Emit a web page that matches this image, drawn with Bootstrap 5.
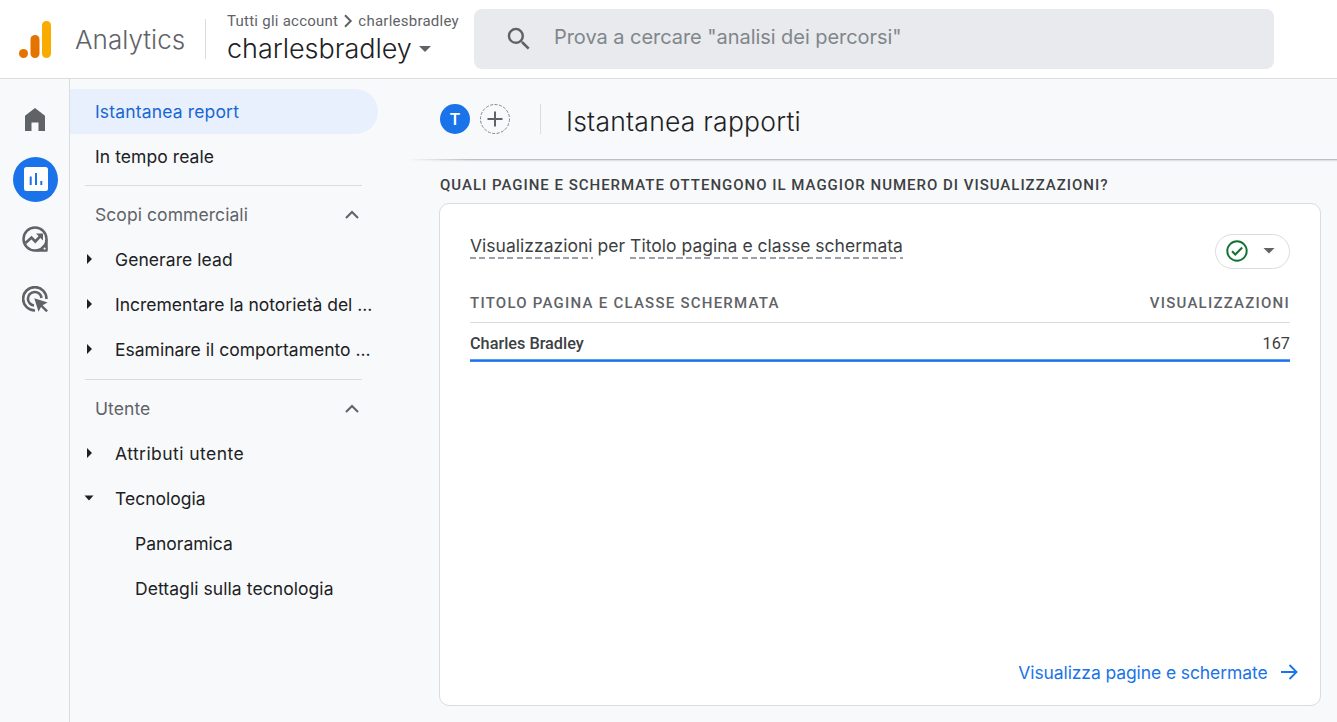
<!DOCTYPE html>
<html lang="it">
<head>
<meta charset="utf-8">
<meta name="viewport" content="width=device-width, initial-scale=1">
<title>Analytics - Istantanea rapporti</title>
<link href="https://cdn.jsdelivr.net/npm/bootstrap@5.3.0/dist/css/bootstrap.min.css" rel="stylesheet">
<style>
body{height:100vh;overflow:hidden;background:#f8f9fb;color:#202124;font-family:Inter,"Open Sans",sans-serif;font-size:17.5px;line-height:24px}
.robo{font-family:Roboto,sans-serif}
svg{display:block;flex:none}
a{text-decoration:none;color:inherit}
.topbar{height:79px;background:#fff;border-bottom:1px solid #dadce0}
.brand-mark{margin-left:19px}
.brand-name{width:130px;margin-left:24px;font-size:26px;letter-spacing:.04px;color:#5f6368;line-height:40px;padding-top:1px;font-weight:350}
.brand-rule{width:1px;height:40px;background:#dadce0}
.account{width:247px;margin-left:21px}
.account-path{font-size:15px;line-height:18px;letter-spacing:.25px;color:#5f6368}
.account-name{font-size:27px;line-height:34px;letter-spacing:-.03px;padding-top:2px;font-weight:350}
.searchbox{width:800px;height:60px;border-radius:8px;background:#e8eaed;color:#80868b;font-size:20px;letter-spacing:-.05px}
.search-icon{margin-left:30px}
.search-hint{margin:0 0 4px 20px}
.rail{width:70px;border-right:1px solid #dadce0;padding:18px 0 0 2px;gap:15px}
.rail a{width:45px;height:45px;padding-bottom:1px}
.rail a:not(.current){padding-right:1px}
.rail a.current{background:#1a73e8}
.sidebar{width:308px;padding-top:10px}
.item{height:45px;padding-left:25px;letter-spacing:.07px;white-space:nowrap}
.item.current{background:#e8f0fe;color:#1967d2;border-radius:0 23px 23px 0;letter-spacing:.16px}
.item.tree{padding-left:13px}
.item.tree svg{width:12px;margin:0 20px 1px 0}
.item.leaf{padding-left:65px}
.item.tight{letter-spacing:0}
.item.loose{letter-spacing:.45px}
.section-name{padding-right:19.500px;color:#5f6368}
.section-name svg{margin-bottom:1px}
.side-rule{height:1px;background:#dadce0;margin:6px 16px 6px 15px}
.side-rule.second{margin-top:7px}
.main-area{padding-left:22px}
.report-head{height:81px;padding:0 0 2px 40px}
.avatar{width:30px;height:30px;border-radius:50%;background:#1a73e8;color:#fff;font-size:17px;font-weight:500}
.add-view{margin-left:10px}
.head-rule{width:1px;height:30px;margin:0 25px 0 30px;background:#dadce0}
.report-title{font-size:26.5px;letter-spacing:.24px;line-height:36px;font-weight:350;margin:0;padding-top:4px}
.fade-rule{height:3px;margin-top:-1px;background:linear-gradient(#bcbfc3 0 1px,#dfe1e4 1px 2px,#f1f2f5 2px 3px);-webkit-mask-image:linear-gradient(90deg,transparent 8px,#000 70px);mask-image:linear-gradient(90deg,transparent 8px,#000 70px)}
.question{margin:11px 0 0 40px;font-size:15px;line-height:24px;font-weight:500;letter-spacing:.99px;color:#3c4043;white-space:nowrap}
.report-card{width:882px;height:503px;margin:6px 0 0 39px;border:1px solid #dadce0;border-radius:10px;padding:30px 30px 20px}
.card-name{color:#3c4043;letter-spacing:.02px;line-height:24px;font-size:17.5px}
.dashed{display:inline-block;height:25px;background:repeating-linear-gradient(90deg,#9aa0a6 0 6px,transparent 6px 9.3px) 0 100%/100% 2px no-repeat}
.status{width:75px;height:35px;border:1px solid #dadce0;border-radius:18px;padding:0 14px 1px 10px}
.col-heads{margin-top:17px;height:37px;padding-bottom:2px;font-size:15px;font-weight:500;color:#5f6368;border-bottom:1px solid #dadce0;letter-spacing:1.24px}
.data-row{height:36px;padding-top:5px;font-size:16.25px;color:#3c4043}
.row-name{font-weight:500}
.data-bar{height:3px;background:linear-gradient(#5c9cf0 0 1px,#1a73e8 1px 2px,#3d89ec 2px 3px)}
.more{color:#1a73e8;letter-spacing:-.1px;margin-right:-7.500px;gap:13px}
.more svg{margin-bottom:2px}
</style>
</head>
<body class="d-flex flex-column">
<header class="topbar d-flex align-items-center flex-shrink-0">
  <svg class="brand-mark" width="32" height="37" viewBox="0 0 32 37"><rect x="23" width="9" height="37" rx="4.5" fill="#f9ab00"/><rect x="11.5" y="14" width="9" height="23" rx="4.5" fill="#e37400"/><circle cx="4.5" cy="32.5" r="4.5" fill="#e37400"/></svg>
  <div class="brand-name">Analytics</div>
  <div class="brand-rule"></div>
  <div class="account">
    <div class="account-path robo d-flex align-items-center"><span>Tutti gli account</span>
      <svg class="ms-1 me-1" width="12" height="14" viewBox="0 0 12 14"><path d="M3 1.2 8.7 7 3 12.8" fill="none" stroke="#5f6368" stroke-width="2"/></svg><span>charlesbradley</span></div>
    <div class="account-name d-flex align-items-center">charlesbradley<svg style="margin-left:7px" width="12" height="6" viewBox="0 0 12 6"><path d="M0 0h12L6 6z" fill="#5f6368"/></svg></div>
  </div>
  <div class="searchbox d-flex align-items-center">
    <svg class="search-icon" width="30" height="30" viewBox="0 0 24 24"><path fill="#5f6368" d="M15.5 14h-.79l-.28-.27A6.47 6.47 0 0 0 16 9.5 6.5 6.5 0 1 0 9.5 16c1.61 0 3.09-.59 4.23-1.57l.27.28v.79l5 4.99L20.49 19zm-6 0C7.01 14 5 11.99 5 9.5S7.01 5 9.5 5 14 7.01 14 9.5 11.99 14 9.5 14z"/></svg>
    <span class="search-hint">Prova a cercare "analisi dei percorsi"</span>
  </div>
</header>
<div class="d-flex flex-grow-1">
  <nav class="rail d-flex flex-column align-items-center flex-shrink-0" aria-label="Sezioni">
    <a href="#" class="d-flex align-items-center justify-content-center" aria-label="Home"><svg width="20" height="23" viewBox="0 0 20 23"><path d="M0 23V7.700L10 0l10 7.700V23h-6.500v-8.500h-7V23z" fill="#5f6368"/></svg></a>
    <a href="#" class="current rounded-circle d-flex align-items-center justify-content-center" aria-label="Rapporti"><svg width="24" height="24" viewBox="0 0 24 24"><rect width="24" height="24" rx="2.500" fill="#fff"/><path d="M6.700 9.500V18M12 6v12M17.300 14v4" stroke="#1a73e8" stroke-width="2"/></svg></a>
    <a href="#" class="d-flex align-items-center justify-content-center" aria-label="Esplora"><svg width="26" height="26" viewBox="0 0 26 26"><path d="M13 24.500A11.500 11.500 0 1 1 24.500 13v11.500z" fill="none" stroke="#5f6368" stroke-width="2.500" stroke-linejoin="round"/><path d="M24.500 13.500A11.500 11.500 0 0 1 14 24.500" fill="none" stroke="#5f6368" stroke-width="2.200"/><circle cx="22.300" cy="22.300" r="3" fill="#5f6368"/><circle cx="22.600" cy="22.600" r="1.100" fill="#f8f9fb"/><path d="m3.500 17 6-5.500 3.800 4 6-6.300" fill="none" stroke="#5f6368" stroke-width="2.600"/><path d="M14 7.500h7v7z" fill="#5f6368"/></svg></a>
    <a href="#" class="d-flex align-items-center justify-content-center" aria-label="Pubblicità"><svg width="26" height="26" viewBox="0 0 26 26"><path d="M24.500 13A11.700 11.700 0 1 0 13 24.500" fill="none" stroke="#5f6368" stroke-width="2.600"/><path d="M19.500 12A6.800 6.800 0 1 0 12 19.500" fill="none" stroke="#5f6368" stroke-width="2.600"/><path d="m12.300 12.300 13.300 4.300-5 2.600 5.400 5.300-1.800 1.700-5.200-5.200-2.500 4.700z" fill="#5f6368"/></svg></a>
  </nav>
  <nav class="sidebar flex-shrink-0" aria-label="Rapporti">
    <a href="#" class="item current d-flex align-items-center">Istantanea report</a>
    <a href="#" class="item d-flex align-items-center">In tempo reale</a>
    <div class="side-rule"></div>
    <div class="item section-name d-flex align-items-center justify-content-between">Scopi commerciali<svg width="14" height="9" viewBox="0 0 14 9"><path d="m1 8 6-6 6 6" fill="none" stroke="#5f6368" stroke-width="2"/></svg></div>
    <a href="#" class="item tree d-flex align-items-center"><svg height="10" viewBox="0 0 12 10"><path d="M4 0v10l5-5z" fill="#202124"/></svg>Generare lead</a>
    <a href="#" class="item tree tight d-flex align-items-center"><svg height="10" viewBox="0 0 12 10"><path d="M4 0v10l5-5z" fill="#202124"/></svg>Incrementare la notorietà del ...</a>
    <a href="#" class="item tree tight d-flex align-items-center"><svg height="10" viewBox="0 0 12 10"><path d="M4 0v10l5-5z" fill="#202124"/></svg>Esaminare il comportamento ...</a>
    <div class="side-rule second"></div>
    <div class="item section-name d-flex align-items-center justify-content-between">Utente<svg width="14" height="9" viewBox="0 0 14 9"><path d="m1 8 6-6 6 6" fill="none" stroke="#5f6368" stroke-width="2"/></svg></div>
    <a href="#" class="item tree loose d-flex align-items-center"><svg height="10" viewBox="0 0 12 10"><path d="M4 0v10l5-5z" fill="#202124"/></svg>Attributi utente</a>
    <a href="#" class="item tree tight d-flex align-items-center"><svg height="10" viewBox="0 0 12 10"><path d="M1.500 2.500h9l-4.500 5z" fill="#202124"/></svg>Tecnologia</a>
    <a href="#" class="item leaf tight d-flex align-items-center">Panoramica</a>
    <a href="#" class="item leaf d-flex align-items-center">Dettagli sulla tecnologia</a>
  </nav>
  <main class="main-area flex-grow-1">
    <div class="report-head d-flex align-items-center">
      <div class="avatar robo d-flex align-items-center justify-content-center">T</div>
      <svg class="add-view" width="30" height="30" viewBox="0 0 30 30"><circle cx="15" cy="15" r="14.500" fill="none" stroke="#80868b" stroke-dasharray="3 1.500"/><path d="M15 7.500v15M7.500 15h15" stroke="#5f6368" stroke-width="2"/></svg>
      <div class="head-rule"></div>
      <h1 class="report-title">Istantanea rapporti</h1>
    </div>
    <div class="fade-rule"></div>
    <div class="question robo">QUALI PAGINE E SCHERMATE OTTENGONO IL MAGGIOR NUMERO DI VISUALIZZAZIONI?</div>
    <section class="card report-card">
      <div class="d-flex justify-content-between">
        <h2 class="card-name fw-normal m-0"><span class="dashed">Visualizzazioni</span> per <span class="dashed">Titolo pagina e classe schermata</span></h2>
        <div class="status d-flex align-items-center justify-content-between"><svg width="22" height="22" viewBox="0 0 22 22"><circle cx="11" cy="11" r="9.700" fill="none" stroke="#137333" stroke-width="2"/><path d="m6 11.200 3.300 3.300 6.900-7" fill="none" stroke="#137333" stroke-width="2"/></svg><svg width="12" height="6" viewBox="0 0 12 6"><path d="M0.500 0h11L6 5.500z" fill="#5f6368"/></svg></div>
      </div>
      <div class="col-heads robo d-flex justify-content-between align-items-center"><span>TITOLO PAGINA E CLASSE SCHERMATA</span><span>VISUALIZZAZIONI</span></div>
      <div class="data-row robo d-flex justify-content-between align-items-center"><span class="row-name">Charles Bradley</span><span>167</span></div>
      <div class="data-bar"></div>
      <a href="#" class="more d-flex align-items-center justify-content-end mt-auto">Visualizza pagine e schermate<svg width="17" height="16" viewBox="0 0 17 16"><path d="M0 8h15.500M8.500 1l7 7-7 7" fill="none" stroke="#1a73e8" stroke-width="1.900"/></svg></a>
    </section>
  </main>
</div>
<script src="https://cdn.jsdelivr.net/npm/bootstrap@5.3.0/dist/js/bootstrap.bundle.min.js"></script>
</body>
</html>
